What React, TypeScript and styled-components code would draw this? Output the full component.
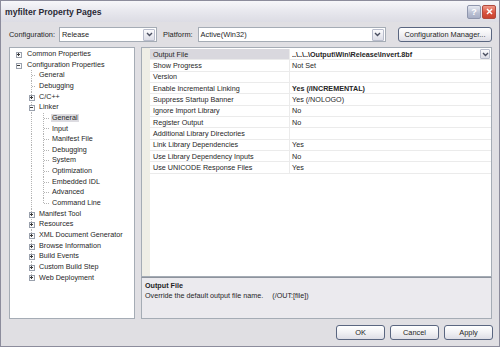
import React from 'react';
import styled, { createGlobalStyle } from 'styled-components';

const GlobalStyle = createGlobalStyle`
  html, body {
    margin: 0;
    padding: 0;
    background: #ffffff;
  }
  body {
    font-family: 'Liberation Sans', Arial, sans-serif;
    color: #1e1e1e;
  }
`;

const Window = styled.div`
  width: 500px;
  height: 347px;
  box-sizing: border-box;
  display: flex;
  flex-direction: column;
  background: #e0dfe3;
  border: 1px solid #8c8c9c;
`;

const TitleBar = styled.div`
  height: 21px;
  flex: none;
  display: flex;
  align-items: center;
  padding: 0 3px 0 4px;
  background: linear-gradient(#f7f7fa 0%, #e9e9ef 45%, #dcdce4 100%);
`;

const TitleText = styled.div`
  flex: 1;
  font-size: 8.6px;
  font-weight: bold;
  color: #2a2a36;
`;

const CaptionButton = styled.div<{ $close?: boolean }>`
  width: 12px;
  height: 12px;
  margin-left: 1px;
  border-radius: 2px;
  border: 1px solid ${(p) => (p.$close ? '#b04a3e' : '#8f96ad')};
  background: ${(p) =>
    p.$close
      ? 'linear-gradient(#f09a8a, #d9523f 55%, #c8432f)'
      : 'linear-gradient(#e6e9f2, #b9bfd2 60%, #a8afc6)'};
  display: flex;
  align-items: center;
  justify-content: center;
  color: #fff;
  font-size: 9px;
  font-weight: bold;
`;

const Body = styled.div`
  flex: 1;
  display: flex;
  flex-direction: column;
  padding: 5px 7px 7px 8px;
  min-height: 0;
`;

const ConfigRow = styled.div`
  height: 15px;
  flex: none;
  display: flex;
  align-items: center;
  font-size: 7.4px;
`;

const Label = styled.span<{ $gap: number; $ml?: number }>`
  margin-right: ${(p) => p.$gap}px;
  margin-left: ${(p) => p.$ml || 0}px;
`;

const Combo = styled.div<{ $width: number }>`
  width: ${(p) => p.$width}px;
  height: 15px;
  box-sizing: border-box;
  border: 1px solid #a5acb5;
  background: #fff;
  display: flex;
  align-items: center;
  padding: 0 1px 0 2px;
`;

const ComboText = styled.span`
  flex: 1;
`;

const DropButton = styled.div<{ $size: number }>`
  width: ${(p) => p.$size}px;
  height: ${(p) => p.$size}px;
  box-sizing: border-box;
  border: 1px solid #b9bdcc;
  border-radius: 1px;
  background: linear-gradient(#fbfbfd, #dcdde6);
  display: flex;
  align-items: center;
  justify-content: center;
`;

const PushButton = styled.div<{ $width: number }>`
  width: ${(p) => p.$width}px;
  height: 15px;
  box-sizing: border-box;
  border: 1px solid #5a6680;
  border-radius: 3px;
  background: linear-gradient(#ffffff, #f1f1f4 50%, #dedee6);
  display: flex;
  align-items: center;
  justify-content: center;
  font-size: 7.4px;
  color: #1e1e1e;
`;

const Spacer = styled.div`
  flex: 1;
`;

const Main = styled.div`
  flex: 1;
  display: flex;
  gap: 6px;
  margin-top: 5px;
  min-height: 0;
`;

const TreePanel = styled.div`
  width: 126px;
  flex: none;
  box-sizing: border-box;
  border: 1px solid #a5acb5;
  background: #fff;
  padding-top: 1px;
`;

const TreeRow = styled.div`
  height: 10.65px;
  display: flex;
  align-items: center;
  font-size: 7.2px;
  color: #262626;
`;

const TreeLabel = styled.span<{ $selected?: boolean }>`
  padding: 0 1px;
  line-height: 8.5px;
  background: ${(p) => (p.$selected ? '#dcdbe0' : 'transparent')};
  white-space: nowrap;
`;

const RightColumn = styled.div`
  flex: 1;
  display: flex;
  flex-direction: column;
  min-width: 0;
`;

const Grid = styled.div`
  flex: 1;
  display: flex;
  border: 1px solid #a5acb5;
  background: #fff;
`;

const MarginStrip = styled.div`
  width: 8px;
  flex: none;
  background: #efeee6;
`;

const Rows = styled.div`
  flex: 1;
  padding-top: 1px;
`;

const PropRow = styled.div`
  height: 11.33px;
  box-sizing: border-box;
  display: flex;
  border-bottom: 1px solid #ebebeb;
  font-size: 7.2px;
  color: #262626;
`;

const NameCell = styled.div<{ $active?: boolean }>`
  width: 140px;
  flex: none;
  box-sizing: border-box;
  border-right: 1px solid #ebebeb;
  padding-left: 3px;
  display: flex;
  align-items: center;
  background: ${(p) => (p.$active ? '#d9d8de' : 'transparent')};
  white-space: nowrap;
  overflow: hidden;
`;

const ValueCell = styled.div<{ $bold?: boolean }>`
  flex: 1;
  display: flex;
  align-items: center;
  padding: 0 1px 0 2px;
  font-weight: ${(p) => (p.$bold ? 'bold' : 'normal')};
  white-space: nowrap;
`;

const Description = styled.div`
  height: 42px;
  flex: none;
  box-sizing: border-box;
  border: 1px solid #a5acb5;
  border-top: 1px solid #8d939d;
  background: #ebeaee;
  padding: 3px 3px;
  font-size: 7.2px;
  line-height: 9.5px;
`;

const DescTitle = styled.div`
  font-weight: bold;
`;

const DescSwitch = styled.span`
  margin-left: 9px;
`;

const ButtonRow = styled.div`
  flex: none;
  height: 14px;
  margin-top: 6px;
  display: flex;
  justify-content: flex-end;
  gap: 5px;
  margin-right: -1px;
`;

type TreeItem = { label: string; level: number; exp?: '+' | '-'; selected?: boolean };

const treeItems: TreeItem[] = [
  { label: 'Common Properties', level: 0, exp: '+' },
  { label: 'Configuration Properties', level: 0, exp: '-' },
  { label: 'General', level: 1 },
  { label: 'Debugging', level: 1 },
  { label: 'C/C++', level: 1, exp: '+' },
  { label: 'Linker', level: 1, exp: '-' },
  { label: 'General', level: 2, selected: true },
  { label: 'Input', level: 2 },
  { label: 'Manifest File', level: 2 },
  { label: 'Debugging', level: 2 },
  { label: 'System', level: 2 },
  { label: 'Optimization', level: 2 },
  { label: 'Embedded IDL', level: 2 },
  { label: 'Advanced', level: 2 },
  { label: 'Command Line', level: 2 },
  { label: 'Manifest Tool', level: 1, exp: '+' },
  { label: 'Resources', level: 1, exp: '+' },
  { label: 'XML Document Generator', level: 1, exp: '+' },
  { label: 'Browse Information', level: 1, exp: '+' },
  { label: 'Build Events', level: 1, exp: '+' },
  { label: 'Custom Build Step', level: 1, exp: '+' },
  { label: 'Web Deployment', level: 1, exp: '+' },
];

const props: { name: string; value: string; bold?: boolean }[] = [
  { name: 'Output File', value: '..\\..\\..\\Output\\Win\\Release\\Invert.8bf', bold: true },
  { name: 'Show Progress', value: 'Not Set' },
  { name: 'Version', value: '' },
  { name: 'Enable Incremental Linking', value: 'Yes (/INCREMENTAL)', bold: true },
  { name: 'Suppress Startup Banner', value: 'Yes (/NOLOGO)' },
  { name: 'Ignore Import Library', value: 'No' },
  { name: 'Register Output', value: 'No' },
  { name: 'Additional Library Directories', value: '' },
  { name: 'Link Library Dependencies', value: 'Yes' },
  { name: 'Use Library Dependency Inputs', value: 'No' },
  { name: 'Use UNICODE Response Files', value: 'Yes' },
];

const guideX = (level: number) => Math.round(8 + 12.5 * level) + 0.5;

// does the guide at `level` keep going below row i?
const continues = (i: number, level: number) => {
  for (let j = i + 1; j < treeItems.length; j++) {
    if (treeItems[j].level < level) return false;
    if (treeItems[j].level === level) return true;
  }
  return false;
};

const Chevron = () => (
  <svg width="7" height="5" viewBox="0 0 7 5">
    <polyline points="1,1 3.5,3.5 6,1" fill="none" stroke="#4a4f60" strokeWidth="1.4" />
  </svg>
);

const TreeGutter: React.FC<{ index: number }> = ({ index }) => {
  const item = treeItems[index];
  const h = 10.65;
  const mid = 5.5;
  const width = [16, 28, 41][item.level];
  const lines: React.ReactNode[] = [];
  for (let l = 1; l < item.level; l++) {
    if (continues(index, l)) {
      lines.push(<line key={'v' + l} x1={guideX(l)} y1={0} x2={guideX(l)} y2={h} />);
    }
  }
  if (item.level >= 1) {
    const gx = guideX(item.level);
    lines.push(<line key="own" x1={gx} y1={0} x2={gx} y2={continues(index, item.level) ? h : mid} />);
    lines.push(<line key="h" x1={gx} y1={mid} x2={width - 2} y2={mid} />);
  }
  const cx = guideX(item.level);
  return (
    <svg width={width} height={h} style={{ flex: 'none' }}>
      <g stroke="#b4b4b4" strokeWidth="1" strokeDasharray="1 1" shapeRendering="crispEdges">
        {lines}
      </g>
      {item.exp && (
        <g shapeRendering="crispEdges">
          <rect x={cx - 2.5} y={3} width={5} height={5} fill="#fbfbfb" stroke="#9aa1ad" />
          <line x1={cx - 1.5} y1={5.5} x2={cx + 1.5} y2={5.5} stroke="#3a3a3a" />
          {item.exp === '+' && <line x1={cx} y1={4} x2={cx} y2={7} stroke="#3a3a3a" />}
        </g>
      )}
    </svg>
  );
};

export default function App() {
  return (
    <>
      <GlobalStyle />
      <Window>
        <TitleBar>
          <TitleText>myfilter Property Pages</TitleText>
          <CaptionButton>?</CaptionButton>
          <CaptionButton $close>
            <svg width="7" height="7" viewBox="0 0 7 7">
              <path d="M1 1 L6 6 M6 1 L1 6" stroke="#fff" strokeWidth="1.5" />
            </svg>
          </CaptionButton>
        </TitleBar>
        <Body>
          <ConfigRow>
            <Label $gap={4}>Configuration:</Label>
            <Combo $width={98}>
              <ComboText>Release</ComboText>
              <DropButton $size={12}>
                <Chevron />
              </DropButton>
            </Combo>
            <Label $gap={5} $ml={6}>
              Platform:
            </Label>
            <Combo $width={188}>
              <ComboText>Active(Win32)</ComboText>
              <DropButton $size={12}>
                <Chevron />
              </DropButton>
            </Combo>
            <Spacer />
            <PushButton $width={94}>Configuration Manager...</PushButton>
          </ConfigRow>
          <Main>
            <TreePanel>
              {treeItems.map((item, i) => (
                <TreeRow key={i}>
                  <TreeGutter index={i} />
                  <TreeLabel $selected={item.selected}>{item.label}</TreeLabel>
                </TreeRow>
              ))}
            </TreePanel>
            <RightColumn>
              <Grid>
                <MarginStrip />
                <Rows>
                  {props.map((p, i) => (
                    <PropRow key={p.name}>
                      <NameCell $active={i === 0}>{p.name}</NameCell>
                      <ValueCell $bold={p.bold}>
                        <ComboText>{p.value}</ComboText>
                        {i === 0 && (
                          <DropButton $size={10}>
                            <Chevron />
                          </DropButton>
                        )}
                      </ValueCell>
                    </PropRow>
                  ))}
                </Rows>
              </Grid>
              <Description>
                <DescTitle>Output File</DescTitle>
                <div>
                  Override the default output file name.<DescSwitch>(/OUT:[file])</DescSwitch>
                </div>
              </Description>
            </RightColumn>
          </Main>
          <ButtonRow>
            <PushButton $width={49}>OK</PushButton>
            <PushButton $width={49}>Cancel</PushButton>
            <PushButton $width={49}>Apply</PushButton>
          </ButtonRow>
        </Body>
      </Window>
    </>
  );
}
